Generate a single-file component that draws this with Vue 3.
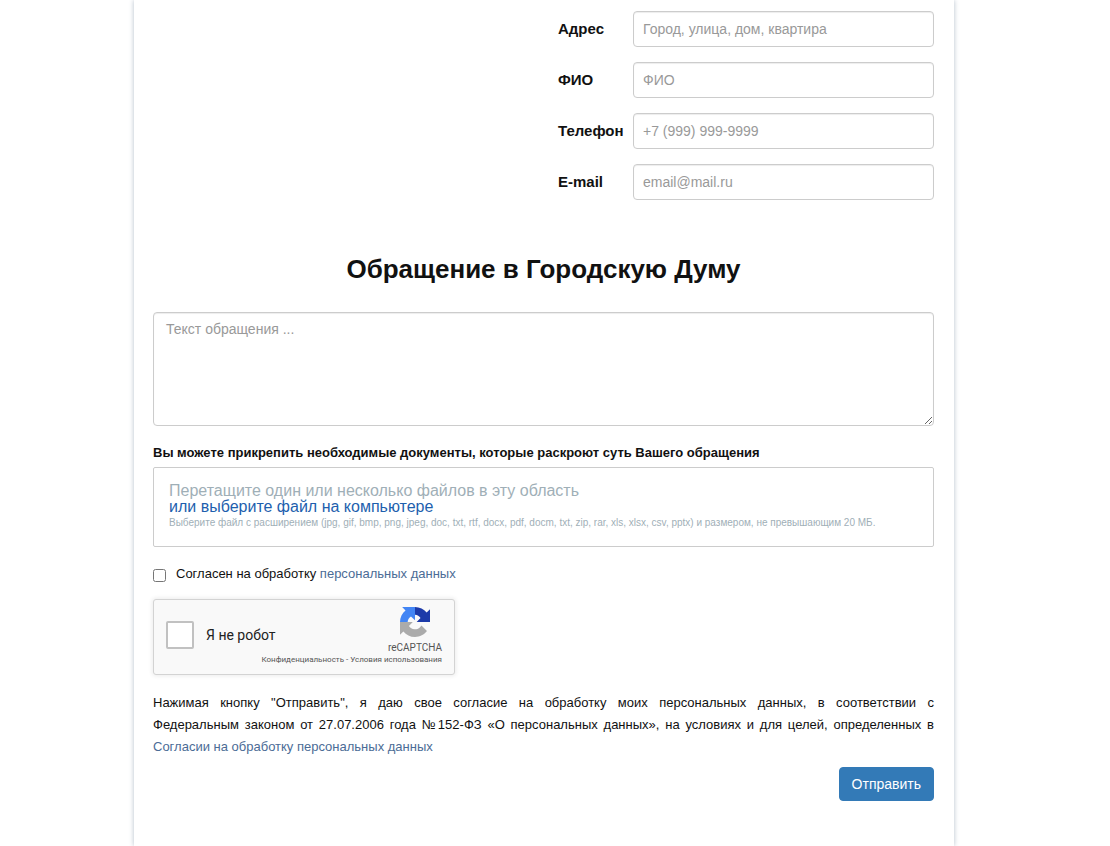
<script setup>
import { ref } from 'vue'

const fields = [
  { id: 'address', label: 'Адрес', type: 'text', placeholder: 'Город, улица, дом, квартира' },
  { id: 'fio', label: 'ФИО', type: 'text', placeholder: 'ФИО' },
  { id: 'phone', label: 'Телефон', type: 'tel', placeholder: '+7 (999) 999-9999' },
  { id: 'email', label: 'E-mail', type: 'email', placeholder: 'email@mail.ru' },
]
const values = ref({ address: '', fio: '', phone: '', email: '' })
const message = ref('')
const agreed = ref(false)
const human = ref(false)
</script>

<template>
  <div class="page">
    <main class="sheet">
      <form @submit.prevent>
        <div class="contacts">
          <div v-for="f in fields" :key="f.id" class="row">
            <label :for="f.id">{{ f.label }}</label>
            <input :id="f.id" v-model="values[f.id]" class="control" :type="f.type" :placeholder="f.placeholder" />
          </div>
        </div>

        <h1>Обращение в Городскую Думу</h1>

        <textarea v-model="message" class="control message" aria-label="Текст обращения" placeholder="Текст обращения ..."></textarea>

        <p class="attach-title">Вы можете прикрепить необходимые документы, которые раскроют суть Вашего обращения</p>
        <div class="drop">
          <p>Перетащите один или несколько файлов в эту область</p>
          <a href="#files">или выберите файл на компьютере</a>
          <small>Выберите файл с расширением (jpg, gif, bmp, png, jpeg, doc, txt, rtf, docx, pdf, docm, txt, zip, rar, xls, xlsx, csv, pptx) и размером, не превышающим 20 МБ.</small>
        </div>

        <div class="agree">
          <input id="agree" v-model="agreed" type="checkbox" />
          <label for="agree">Согласен на обработку <a href="#personal">персональных данных</a></label>
        </div>

        <div class="captcha">
          <div class="robot">
            <input id="robot" v-model="human" type="checkbox" />
            <label for="robot">Я не робот</label>
          </div>
          <div class="brand">
            <svg viewBox="0 0 64 64" aria-hidden="true">
              <path fill="#1c3aa9" d="M64 32V4.700l-7.200 7.200C51 4.700 42 .1 32 .1v16.200c5 .4 9.300 3.100 11.800 7.100L35.500 32H64" />
              <path fill="#4285f4" d="M32 .1H4.600l7.200 7.200C4.600 13.100 0 22 0 32h16.300c.4-5 3.100-9.300 7.100-11.800L32 28.500V.1" />
              <path fill="#ababab" d="M0 32v27.300l7.200-7.200C13 59.300 22 63.900 32 63.900c10.400 0 19.600-5 25.500-12.700L45.700 39.400a15.600 15.600 0 0 1-4.700 5.300c-2.100 1.600-5 2.900-9 2.900-.5 0-.9-.1-1.100-.2-5-.4-9.300-3.100-11.900-7.100l8.300-8.300H0" />
            </svg>
            <span>reCAPTCHA</span>
          </div>
          <div class="terms"><a href="#privacy">Конфиденциальность</a> - <a href="#terms">Условия использования</a></div>
        </div>

        <p class="consent">
          <span>Нажимая кнопку "Отправить", я даю свое согласие на обработку моих персональных данных, в соответствии с</span>
          <span>Федеральным законом от 27.07.2006 года №152-ФЗ «О персональных данных», на условиях и для целей, определенных в</span>
          <a href="#consent">Согласии на обработку персональных данных</a>
        </p>
        <div class="actions"><button type="submit">Отправить</button></div>
      </form>
    </main>
  </div>
</template>

<style>
body {
  margin: 0;
  background: #fff;
}
</style>

<style scoped>
.page {
  padding-right: 22px;
  font-family: "Liberation Sans", Arial, sans-serif;
  font-size: 14px;
  line-height: 20px;
  color: #111;
}
.page * {
  box-sizing: border-box;
}
.sheet {
  max-width: 820px;
  min-height: 100vh;
  margin: 0 auto;
  padding: 11px 20px 45px 19px;
  box-sizing: border-box;
  box-shadow: 0 0 5px #b4bfcb;
}
a {
  color: #4b6c96;
  text-decoration: none;
}
.contacts {
  display: flex;
  flex-direction: column;
  gap: 15px;
  width: 376px;
  margin-left: auto;
}
.row {
  display: flex;
  align-items: center;
}
.row label {
  width: 75px;
  font-size: 15px;
  font-weight: bold;
}
.control {
  flex: 1;
  min-width: 0;
  height: 36px;
  padding: 6px 9px;
  border: 1px solid #ccc;
  border-radius: 4px;
  background: #fff;
  box-shadow: inset 0 1px 1px rgba(0, 0, 0, 0.075);
  font: inherit;
  color: #555;
}
.control::placeholder {
  color: #999;
}
h1 {
  margin: 54px 0 28px;
  font-size: 26px;
  line-height: 30px;
  text-align: center;
}
.message {
  display: block;
  width: 100%;
  height: 114px;
  padding: 6px 12px;
  resize: vertical;
}
.attach-title {
  margin: 17px 0 4px;
  font-size: 13px;
  font-weight: bold;
}
.drop {
  min-height: 80px;
  padding: 15px;
  border: 1px solid #ccc;
  border-radius: 2px;
  font-size: 16px;
  line-height: 16px;
  color: #9fafb7;
}
.drop p {
  margin: 0;
}
.drop a {
  display: block;
  color: #1e5fae;
}
.drop small {
  display: block;
  font-size: 10px;
}
.agree {
  display: flex;
  align-items: center;
  gap: 10px;
  margin-top: 17px;
  font-size: 13px;
}
.agree input {
  width: 13px;
  height: 13px;
  margin: 3px 0 0;
}
.captcha {
  display: grid;
  grid-template-columns: 1fr auto;
  align-content: start;
  width: 302px;
  height: 76px;
  margin-top: 15px;
  padding: 7px 12px 0;
  border: 1px solid #d3d3d3;
  border-radius: 3px;
  background: #f9f9f9;
  box-shadow: 0 0 4px 1px rgba(0, 0, 0, 0.08);
  font-family: Roboto, sans-serif;
}
.robot {
  display: flex;
  align-items: center;
  gap: 12px;
  padding-top: 8px;
  color: #222;
}
.robot input {
  appearance: none;
  width: 28px;
  height: 28px;
  margin: 0;
  border: 2px solid #c1c1c1;
  border-radius: 2px;
  background: #fff;
}
.robot input:checked {
  background: #4285f4;
}
.brand {
  display: flex;
  flex-direction: column;
  align-items: center;
  font-size: 10px;
  line-height: 12px;
  color: #555;
}
.brand svg {
  width: 30px;
  height: 30px;
  margin-bottom: 5px;
}
.terms {
  grid-column: 1 / -1;
  text-align: right;
  font-size: 8px;
  line-height: 12px;
  color: #555;
}
.terms a {
  color: inherit;
}
.consent {
  margin: 17px 0 9px;
  font-size: 13px;
  line-height: 22px;
}
.consent span {
  display: block;
  text-align: justify;
  text-align-last: justify;
}
.actions {
  display: flex;
  justify-content: flex-end;
}
button {
  height: 34px;
  padding: 6px 12px;
  border: 1px solid #337ab7;
  border-radius: 4px;
  background: #337ab7;
  font: inherit;
  color: #fff;
}
</style>
